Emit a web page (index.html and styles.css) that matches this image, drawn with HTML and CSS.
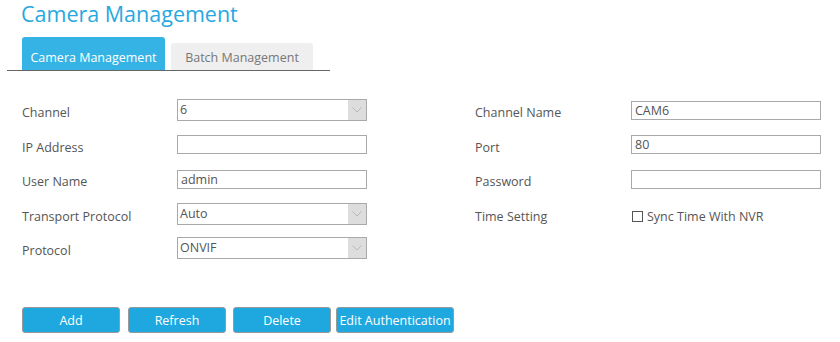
FILE: index.html
```html
<!DOCTYPE html>
<html>
<head>
<meta charset="utf-8">
<link rel="stylesheet" href="styles.css">
</head>
<body>
<div class="page">
  <h1 class="title">Camera Management</h1>
  <div class="tabs">
    <div class="tab active">Camera Management</div>
    <div class="tab">Batch Management</div>
  </div>
  <div class="form">
    <div class="label">Channel</div>
    <div class="select"><span class="val">6</span><span class="arrow"><svg width="10" height="6" viewBox="0 0 10 6"><path d="M0.5 0.5 L5 5 L9.5 0.5" fill="none" stroke="#b8b8b8" stroke-width="1"/></svg></span></div>
    <div></div>
    <div class="label">Channel Name</div>
    <div class="input">CAM6</div>

    <div class="label">IP Address</div>
    <div class="input"></div>
    <div></div>
    <div class="label">Port</div>
    <div class="input">80</div>

    <div class="label">User Name</div>
    <div class="input">admin</div>
    <div></div>
    <div class="label">Password</div>
    <div class="input"></div>

    <div class="label">Transport Protocol</div>
    <div class="select"><span class="val">Auto</span><span class="arrow"><svg width="10" height="6" viewBox="0 0 10 6"><path d="M0.5 0.5 L5 5 L9.5 0.5" fill="none" stroke="#b8b8b8" stroke-width="1"/></svg></span></div>
    <div></div>
    <div class="label">Time Setting</div>
    <div class="check"><span class="box"></span>Sync Time With NVR</div>

    <div class="label">Protocol</div>
    <div class="select"><span class="val">ONVIF</span><span class="arrow"><svg width="10" height="6" viewBox="0 0 10 6"><path d="M0.5 0.5 L5 5 L9.5 0.5" fill="none" stroke="#b8b8b8" stroke-width="1"/></svg></span></div>
    <div></div>
    <div></div>
    <div></div>
  </div>
  <div class="buttons">
    <button class="btn w98 gap8">Add</button>
    <button class="btn w98 gap7">Refresh</button>
    <button class="btn w98 gap5">Delete</button>
    <button class="btn w117">Edit Authentication</button>
  </div>
</div>
</body>
</html>
```
FILE: styles.css
```css
html, body {
  margin: 0;
  padding: 0;
  background: #ffffff;
}
body {
  font-family: "Open Sans", "Liberation Sans", sans-serif;
  font-size: 12.5px;
  color: #555555;
}
.page {
  width: 840px;
  height: 342px;
  overflow: hidden;
}
.title {
  margin: 0;
  padding: 0 0 0 21px;
  height: 37px;
  font-size: 21.5px;
  font-weight: normal;
  line-height: 28px;
  color: #27a8e0;
}
.tabs {
  margin-left: 7px;
  width: 323px;
  height: 34px;
  border-bottom: 1px solid #666666;
  display: flex;
  align-items: flex-end;
  padding-left: 15px;
  box-sizing: border-box;
  gap: 6px;
}
.tab {
  width: 142px;
  height: 27px;
  background: #efefef;
  border-radius: 3px 3px 0 0;
  color: #777777;
  text-align: center;
  line-height: 29px;
  font-size: 12.5px;
}
.tab.active {
  width: 143px;
  height: 33px;
  background: #35b3e4;
  color: #ffffff;
  line-height: 41px;
}
.form {
  display: grid;
  grid-template-columns: 155px 190px 108px 156px 190px;
  grid-auto-rows: 34.5px;
  align-items: center;
  margin-top: 22px;
  padding-left: 22px;
}
.label {
  color: #555555;
  padding-top: 5px;
}
.input {
  height: 19px;
  border: 1px solid #a9a9a9;
  box-sizing: border-box;
  line-height: 18px;
  padding-left: 3px;
  color: #555555;
}
.select {
  height: 22px;
  border: 1px solid #a9a9a9;
  box-sizing: border-box;
  display: flex;
  align-items: stretch;
  color: #555555;
}
.select .val {
  flex: 1;
  padding-left: 2px;
  line-height: 19px;
}
.select .arrow {
  width: 18px;
  background: #dddddd;
  display: flex;
  align-items: center;
  justify-content: center;
}
.check {
  display: flex;
  align-items: center;
  padding-top: 5px;
  padding-left: 1px;
}
.box {
  width: 9px;
  height: 9px;
  border: 1px solid #555555;
  margin-right: 4px;
}
.buttons {
  display: flex;
  margin-top: 41px;
  padding-left: 22px;
}
.btn {
  height: 26px;
  background: #1fa8df;
  color: #ffffff;
  border: 1px solid #999999;
  border-radius: 3px;
  font-family: "Open Sans", "Liberation Sans", sans-serif;
  font-size: 12.5px;
  padding: 0;
  line-height: 26px;
}
.w98 { width: 98px; }
.w117 { width: 118px; }
.gap8 { margin-right: 8px; }
.gap7 { margin-right: 7px; }
.gap5 { margin-right: 5px; }
```
